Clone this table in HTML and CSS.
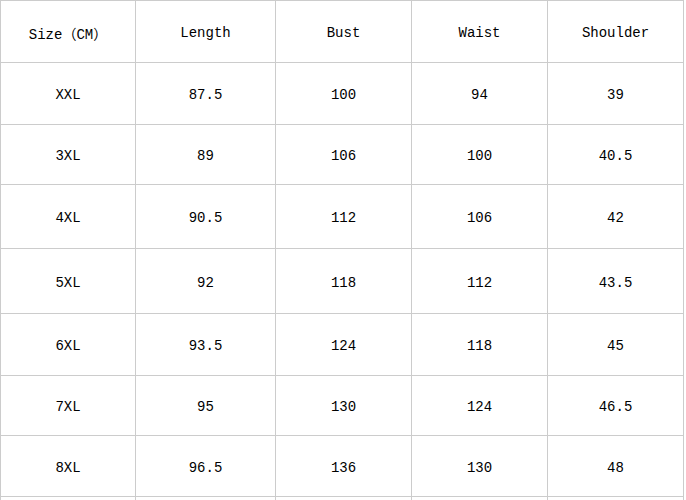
FILE: index.html
```html
<!DOCTYPE html>
<html>
<head>
<meta charset="utf-8">
<link rel="stylesheet" href="styles.css">
</head>
<body>
<div class="sheet">
  <div class="cell">Size（CM）</div><div class="cell">Length</div><div class="cell">Bust</div><div class="cell">Waist</div><div class="cell">Shoulder</div>
  <div class="cell">XXL</div><div class="cell">87.5</div><div class="cell">100</div><div class="cell">94</div><div class="cell">39</div>
  <div class="cell">3XL</div><div class="cell">89</div><div class="cell">106</div><div class="cell">100</div><div class="cell">40.5</div>
  <div class="cell">4XL</div><div class="cell">90.5</div><div class="cell">112</div><div class="cell">106</div><div class="cell">42</div>
  <div class="cell">5XL</div><div class="cell">92</div><div class="cell">118</div><div class="cell">112</div><div class="cell">43.5</div>
  <div class="cell">6XL</div><div class="cell">93.5</div><div class="cell">124</div><div class="cell">118</div><div class="cell">45</div>
  <div class="cell">7XL</div><div class="cell">95</div><div class="cell">130</div><div class="cell">124</div><div class="cell">46.5</div>
  <div class="cell">8XL</div><div class="cell">96.5</div><div class="cell">136</div><div class="cell">130</div><div class="cell">48</div>
  <div class="cell"></div><div class="cell"></div><div class="cell"></div><div class="cell"></div><div class="cell"></div>
</div>
</body>
</html>
```

FILE: styles.css
```css
html, body {
  margin: 0;
  padding: 0;
  background: #ffffff;
  overflow: hidden;
  height: 500px;
}
.sheet {
  display: grid;
  width: 682px;
  grid-template-columns: 134px 139px 135px 135px 135px;
  grid-template-rows: 61px 61px 59px 63px 64px 61px 59px 60px 2px;
  gap: 1px;
  padding: 1px;
  background: #cccccc;
  font-family: "Liberation Mono", "Noto Sans CJK SC", monospace;
  font-size: 14px;
  color: #000000;
}
.cell {
  background: #ffffff;
  display: flex;
  align-items: center;
  justify-content: center;
  padding-top: 3px;
  box-sizing: border-box;
  overflow: hidden;
}
```
